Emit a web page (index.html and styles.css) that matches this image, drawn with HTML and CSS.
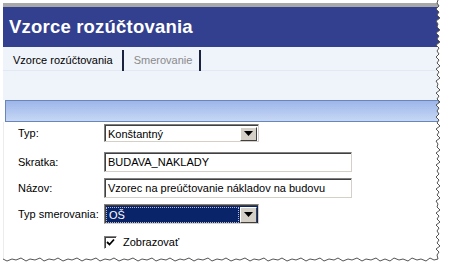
FILE: index.html
```html
<!DOCTYPE html>
<html>
<head>
<meta charset="utf-8">
<link rel="stylesheet" href="styles.css">
</head>
<body>
<div class="shot">
  <div class="topline"></div>
  <div class="header">Vzorce rozúčtovania</div>
  <div class="tabs">
    <div class="tab active">Vzorce rozúčtovania</div>
    <div class="tab">Smerovanie</div>
  </div>
  <div class="spacer"></div>
  <div class="bar"></div>
  <div class="form">
    <div class="row r1">
      <div class="label">Typ:</div>
      <div class="select">
        <span class="val">Konštantný</span>
        <span class="btn"><svg width="9" height="5" viewBox="0 0 9 5"><path d="M0 0h9L4.5 5z" fill="#000"/></svg></span>
      </div>
    </div>
    <div class="row r2">
      <div class="label">Skratka:</div>
      <div class="input">BUDAVA_NAKLADY</div>
    </div>
    <div class="row r3">
      <div class="label">Názov:</div>
      <div class="input">Vzorec na preúčtovanie nákladov na budovu</div>
    </div>
    <div class="row r4">
      <div class="label">Typ smerovania:</div>
      <div class="select sel">
        <span class="val">OŠ</span>
        <span class="btn"><svg width="9" height="5" viewBox="0 0 9 5"><path d="M0 0h9L4.5 5z" fill="#000"/></svg></span>
      </div>
    </div>
    <div class="row r5">
      <div class="label"></div>
      <div class="check">
        <span class="box"><svg width="9" height="9" viewBox="0 0 9 9"><path d="M1 4l2.5 2.5L8 1.5" fill="none" stroke="#000" stroke-width="1.8"/></svg></span>
        <span class="ctext">Zobrazovať</span>
      </div>
    </div>
  </div>
  <svg class="torn" width="451" height="279" viewBox="0 0 451 279">
    <path d="M451 0 L438 0 L437 3 L439 6 L436 9 L439 12 L437 15 L440 18 L436 21 L438 24 L437 27 L440 30 L436 33 L439 36 L437 39 L440 42 L436 45 L439 48 L437 51 L439 54 L436 57 L439 60 L437 63 L440 66 L436 69 L439 72 L437 75 L440 78 L436 81 L438 84 L437 87 L440 90 L436 93 L439 96 L437 99 L440 102 L436 105 L439 108 L437 111 L439 114 L436 117 L439 120 L437 123 L440 126 L436 129 L439 132 L437 135 L440 138 L436 141 L438 144 L437 147 L440 150 L436 153 L439 156 L437 159 L440 162 L436 165 L439 168 L437 171 L439 174 L436 177 L439 180 L437 183 L440 186 L436 189 L439 192 L437 195 L440 198 L436 201 L438 204 L437 207 L440 210 L436 213 L439 216 L437 219 L440 222 L436 225 L439 228 L437 231 L439 234 L436 237 L439 240 L437 243 L440 246 L436 249 L439 252 L437 255 L438 259 L434 260 L430 258 L426 261 L421 259 L417 260 L412 258 L408 261 L403 259 L399 260 L394 258 L390 261 L385 259 L380 261 L376 258 L371 260 L366 259 L362 261 L357 258 L352 260 L348 259 L343 261 L338 258 L334 260 L329 259 L324 261 L320 258 L315 260 L310 259 L306 261 L301 258 L296 260 L292 259 L287 261 L282 258 L278 260 L273 259 L268 261 L264 258 L259 260 L254 259 L250 261 L245 258 L240 260 L236 259 L231 261 L226 258 L222 260 L217 259 L212 261 L208 258 L203 260 L198 259 L194 261 L189 258 L184 260 L180 259 L175 261 L170 258 L166 260 L161 259 L156 261 L152 258 L147 260 L142 259 L138 261 L133 258 L128 260 L124 259 L119 261 L114 258 L110 260 L105 259 L100 261 L96 258 L91 260 L86 259 L82 261 L77 258 L72 260 L68 259 L63 261 L58 258 L54 260 L49 259 L44 261 L40 258 L35 260 L30 259 L26 261 L21 258 L16 260 L12 259 L7 261 L3 259 L0 260 L0 279 L451 279 Z" fill="#fff"/>
    <path d="M438 0 L437 3 L439 6 L436 9 L439 12 L437 15 L440 18 L436 21 L438 24 L437 27 L440 30 L436 33 L439 36 L437 39 L440 42 L436 45 L439 48 L437 51 L439 54 L436 57 L439 60 L437 63 L440 66 L436 69 L439 72 L437 75 L440 78 L436 81 L438 84 L437 87 L440 90 L436 93 L439 96 L437 99 L440 102 L436 105 L439 108 L437 111 L439 114 L436 117 L439 120 L437 123 L440 126 L436 129 L439 132 L437 135 L440 138 L436 141 L438 144 L437 147 L440 150 L436 153 L439 156 L437 159 L440 162 L436 165 L439 168 L437 171 L439 174 L436 177 L439 180 L437 183 L440 186 L436 189 L439 192 L437 195 L440 198 L436 201 L438 204 L437 207 L440 210 L436 213 L439 216 L437 219 L440 222 L436 225 L439 228 L437 231 L439 234 L436 237 L439 240 L437 243 L440 246 L436 249 L439 252 L437 255 L438 259 L434 260 L430 258 L426 261 L421 259 L417 260 L412 258 L408 261 L403 259 L399 260 L394 258 L390 261 L385 259 L380 261 L376 258 L371 260 L366 259 L362 261 L357 258 L352 260 L348 259 L343 261 L338 258 L334 260 L329 259 L324 261 L320 258 L315 260 L310 259 L306 261 L301 258 L296 260 L292 259 L287 261 L282 258 L278 260 L273 259 L268 261 L264 258 L259 260 L254 259 L250 261 L245 258 L240 260 L236 259 L231 261 L226 258 L222 260 L217 259 L212 261 L208 258 L203 260 L198 259 L194 261 L189 258 L184 260 L180 259 L175 261 L170 258 L166 260 L161 259 L156 261 L152 258 L147 260 L142 259 L138 261 L133 258 L128 260 L124 259 L119 261 L114 258 L110 260 L105 259 L100 261 L96 258 L91 260 L86 259 L82 261 L77 258 L72 260 L68 259 L63 261 L58 258 L54 260 L49 259 L44 261 L40 258 L35 260 L30 259 L26 261 L21 258 L16 260 L12 259 L7 261 L3 259" fill="none" stroke="#555" stroke-width="1"/>
  </svg>
</div>
</body>
</html>
```

FILE: styles.css
```css
html, body {
  margin: 0;
  padding: 0;
  background: #fff;
}
body {
  width: 451px;
  height: 279px;
  overflow: hidden;
  font-family: "Liberation Sans", Arial, sans-serif;
  font-size: 11px;
  color: #000;
}
.shot {
  position: relative;
  width: 451px;
  height: 279px;
  padding: 3px 0 0 3px;
  box-sizing: border-box;
}
.topline {
  height: 4px;
  width: 436px;
  background: #a8a8a8;
}
.header {
  height: 40px;
  width: 436px;
  background: #333f8f;
  color: #fff;
  font-weight: bold;
  font-size: 18.5px;
  line-height: 40px;
  padding-left: 6px;
  box-sizing: border-box;
  letter-spacing: 0.2px;
}
.tabs {
  display: flex;
  height: 24px;
  width: 436px;
  background: #eff3fa;
  border-bottom: 1px solid #e3e9f4;
  box-sizing: border-box;
  padding-top: 3px;
}
.tab {
  height: 21px;
  line-height: 20px;
  padding: 0 7px 0 10px;
  border-right: 2px solid #1c2340;
  color: #000;
}
.tab + .tab {
  color: #8a8a8a;
}
.tab.active {
  padding-left: 10px;
  padding-right: 9px;
}
.spacer {
  height: 29px;
  width: 436px;
  background: #eff3fa;
}
.bar {
  margin-left: 2px;
  width: 434px;
  height: 22px;
  box-sizing: border-box;
  border: 1px solid #6a86b8;
  background: linear-gradient(#9db6ea, #c7d8f5);
}
.form {
  border-left: 1px solid #ececec;
  width: 434px;
  height: 137px;
  padding-top: 2px;
  box-sizing: border-box;
}
.row {
  display: flex;
  align-items: center;
  height: 20px;
}
.r1 { height: 18px; }
.r2 { margin-top: 10px; }
.r3 { margin-top: 6px; }
.r4 { margin-top: 6px; }
.r5 { margin-top: 11px; height: 14px; }
.label {
  width: 86px;
  padding-left: 14px;
  font-size: 11px;
}
.select, .input {
  height: 100%;
  box-sizing: border-box;
  border: 1px solid;
  border-color: #808080 #d4d0c8 #d4d0c8 #808080;
  box-shadow: inset 1px 1px 0 #404040;
  background: #fff;
  display: flex;
  align-items: center;
  font-size: 11px;
}
.select {
  width: 155px;
  padding: 1px 1px 0 3px;
}
.input {
  width: 248px;
  padding-left: 3px;
}
.val {
  flex: 1;
  line-height: 14px;
}
.btn {
  width: 17px;
  height: 14px;
  box-sizing: border-box;
  background: #d4d0c8;
  border: 1px solid;
  border-color: #fff #404040 #404040 #fff;
  display: flex;
  align-items: center;
  justify-content: center;
}
.sel .btn {
  height: 16px;
}
.sel {
  background: #0a246a;
  color: #fff;
  padding-left: 2px;
}
.sel .val {
  padding-left: 2px;
  margin-right: 2px;
  outline: 1px dotted #b8b8c8;
}
.check {
  display: flex;
  align-items: center;
}
.box {
  width: 13px;
  height: 13px;
  box-sizing: border-box;
  border: 1px solid;
  border-color: #808080 #fff #fff #808080;
  box-shadow: inset 1px 1px 0 #404040;
  background: #fff;
  display: flex;
  align-items: center;
  justify-content: center;
}
.ctext {
  margin-left: 6px;
  font-size: 11px;
}
.torn {
  position: absolute;
  left: 0;
  top: 0;
}
```
